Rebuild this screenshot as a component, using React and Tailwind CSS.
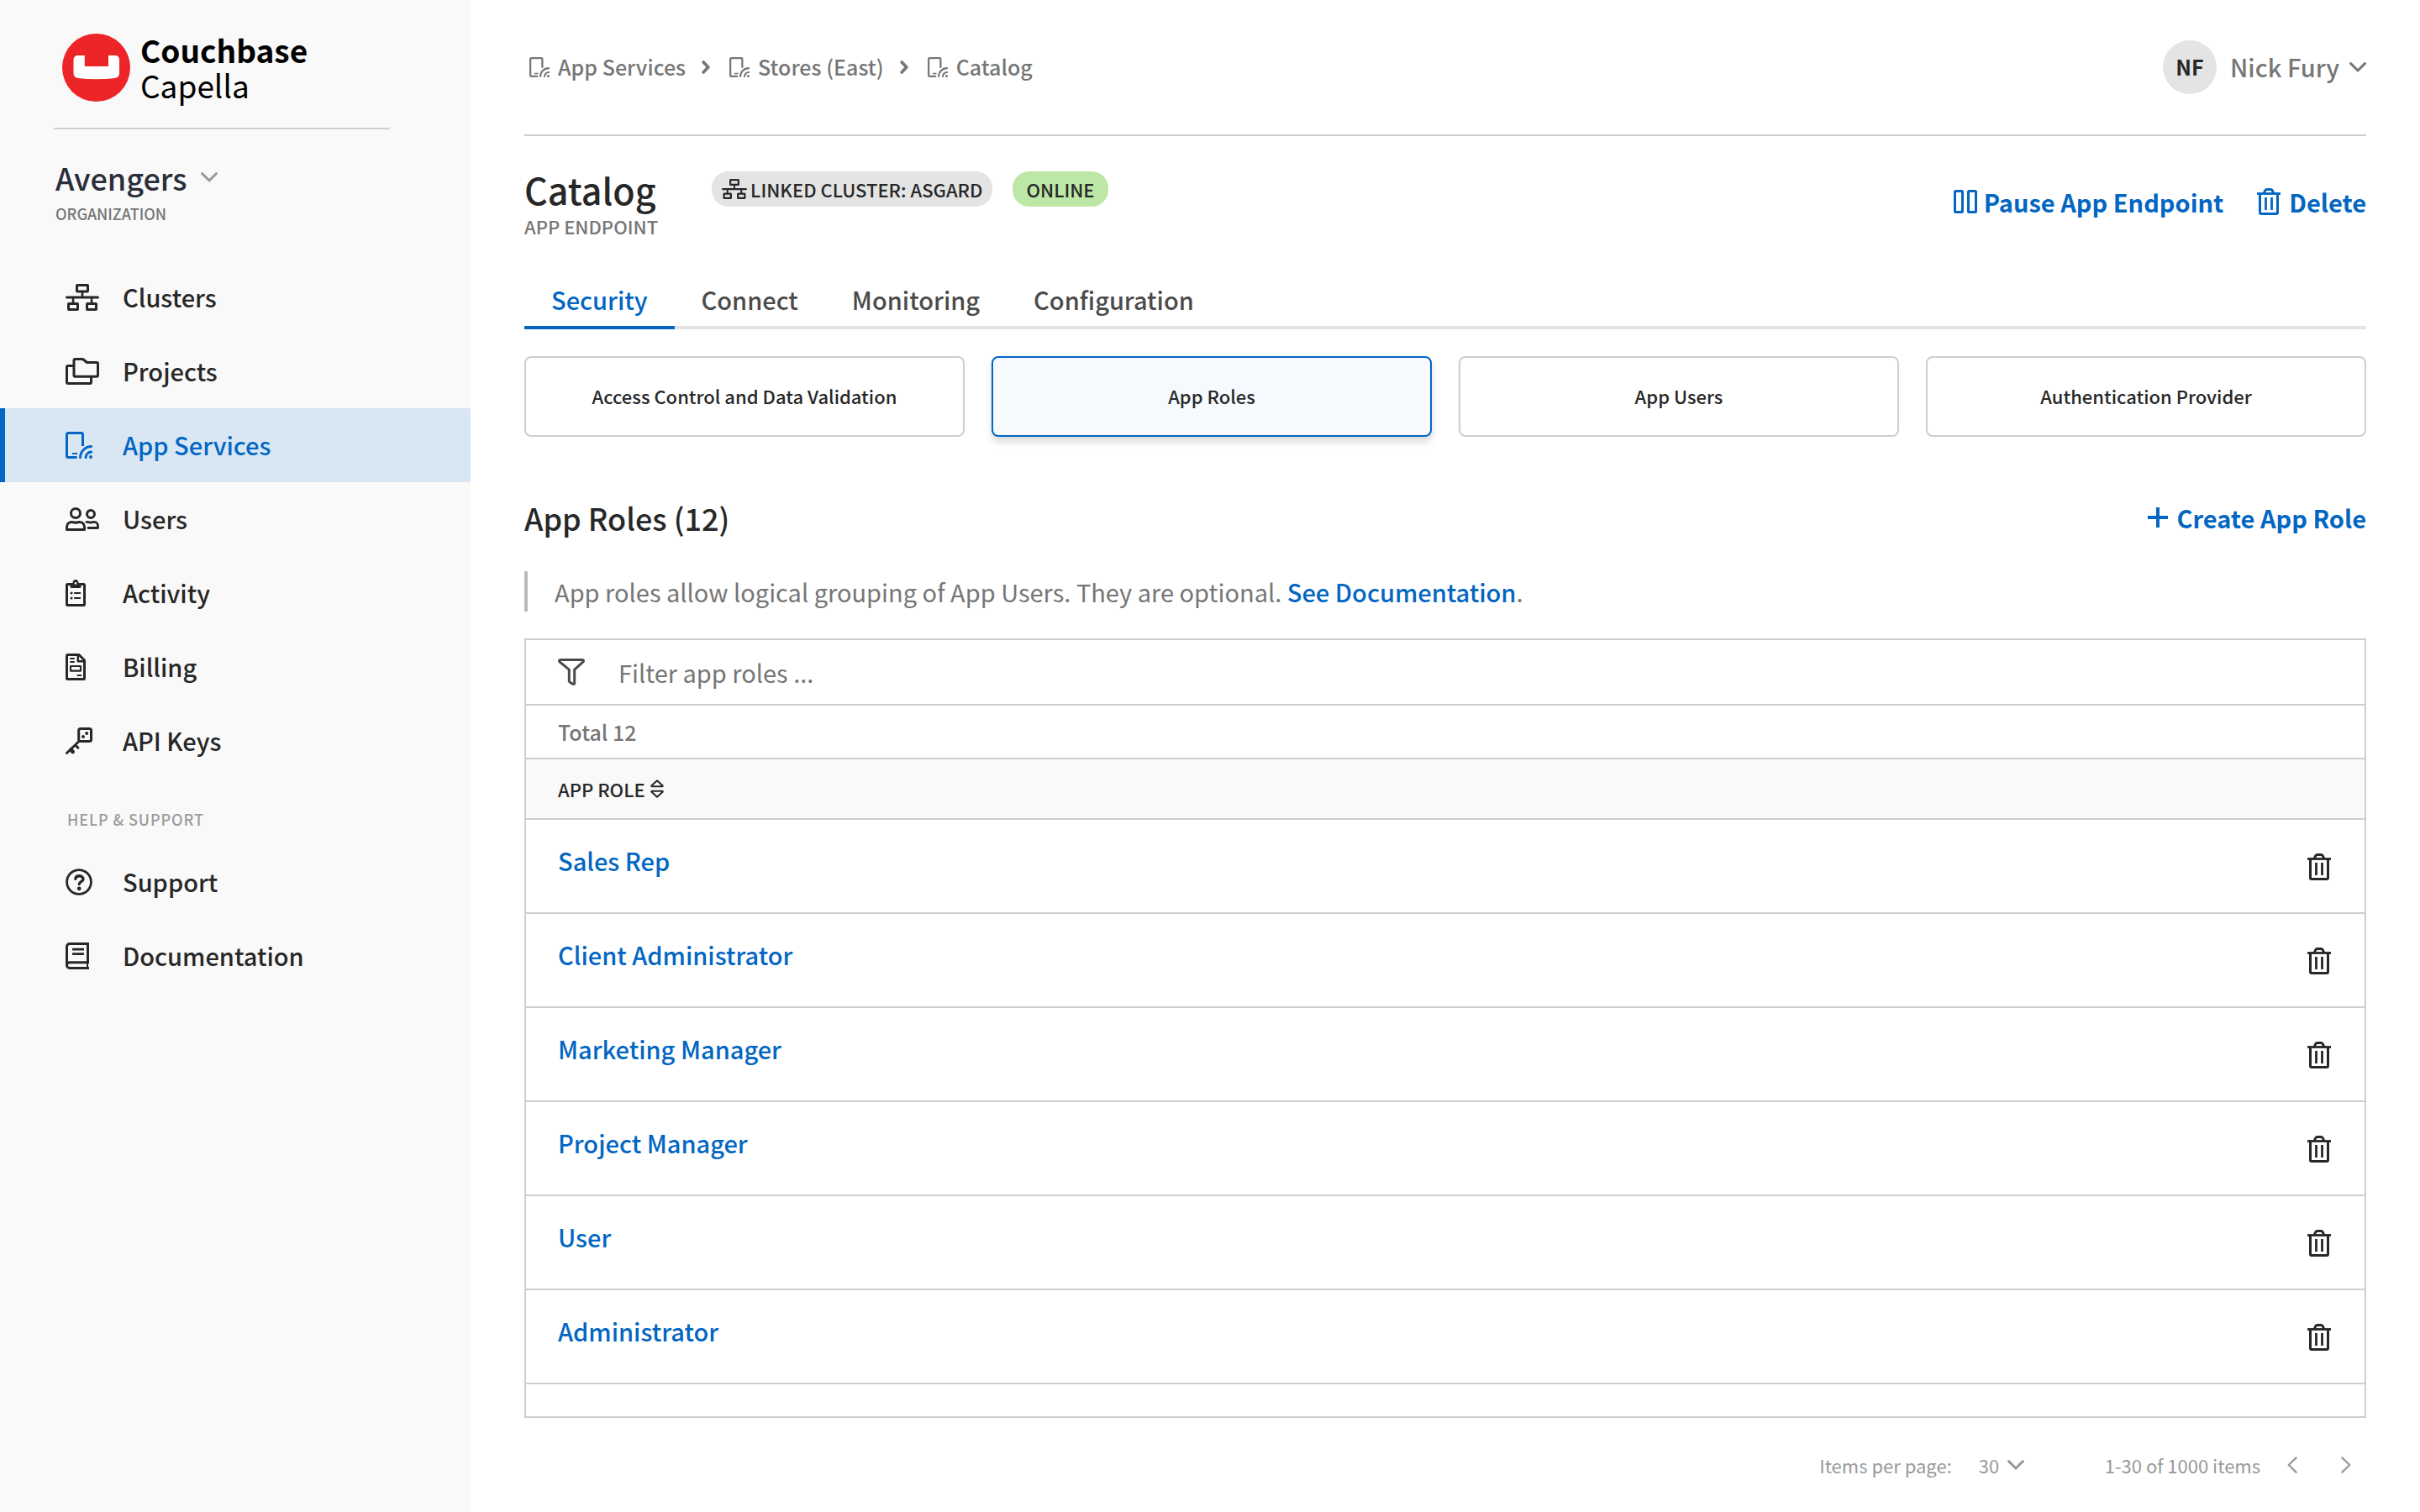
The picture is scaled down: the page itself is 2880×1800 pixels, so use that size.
const strokeProps = {
  fill: "none",
  stroke: "currentColor",
  strokeWidth: 3,
  strokeLinecap: "round",
  strokeLinejoin: "round",
  "aria-hidden": true,
};

function ClustersIcon({ className = "h-8 w-10" }) {
  return (
    <svg viewBox="0 0 40 32" className={className} {...strokeProps}>
      <rect x="13.5" y="1.5" width="13" height="7.5" rx="0.5" />
      <path d="M1.5 16H38.5" />
      <path d="M20 9V16M9 16V23M31 16V23" strokeWidth="2.6" />
      <rect x="3.5" y="23.5" width="11" height="7" rx="0.5" />
      <rect x="25.5" y="23.5" width="11" height="7" rx="0.5" />
    </svg>
  );
}

function ProjectsIcon() {
  return (
    <svg viewBox="0 0 40 32" className="h-8 w-10" {...strokeProps}>
      <path d="M11.5 1.5H20.5L25.5 5.5H37A1.5 1.5 0 0 1 38.5 7V20.7A1.5 1.5 0 0 1 37 22.2H11.5A1.5 1.5 0 0 1 10 20.7V3A1.5 1.5 0 0 1 11.5 1.5Z" />
      <path d="M9 9.5H3A1.5 1.5 0 0 0 1.5 11V29A1.5 1.5 0 0 0 3 30.5H29A1.5 1.5 0 0 0 30.5 29V23" />
    </svg>
  );
}

function AppServicesIcon({ className = "size-8" }) {
  return (
    <svg viewBox="0 0 32 32" className={className} {...strokeProps}>
      <path d="M20.5 17V3A1.5 1.5 0 0 0 19 1.5H3A1.5 1.5 0 0 0 1.5 3V29A1.5 1.5 0 0 0 3 30.5H13.5" strokeLinecap="butt" />
      <path d="M8 26H14" strokeWidth="2" strokeLinecap="butt" />
      <path d="M30.8 17.5A13.3 13.3 0 0 0 17.5 30.8" strokeWidth="2.8" />
      <path d="M30.8 24A6.8 6.8 0 0 0 24 30.8" strokeWidth="2.8" />
      <circle cx="30" cy="30" r="2" fill="currentColor" stroke="none" />
    </svg>
  );
}

function UsersIcon() {
  return (
    <svg viewBox="0 0 40 28" className="h-7 w-10" {...strokeProps}>
      <circle cx="12" cy="7" r="5.5" />
      <path d="M1.5 26.5V23.5C1.5 20 4 17.4 7.5 17.4C9 17.4 10 18.2 12 18.2S15 17.4 16.5 17.4C20 17.4 22.5 20 22.5 23.5V26.5Z" />
      <circle cx="30" cy="8" r="4.5" />
      <path d="M25 17.4C26.5 17.4 28 18 30 18S33 17.4 34.2 17.4C37 17.4 38.5 19.6 38.5 22.2V24.5H27" strokeWidth="2.8" />
    </svg>
  );
}

function ActivityIcon() {
  return (
    <svg viewBox="0 0 24 32" className="h-8 w-6" {...strokeProps}>
      <rect x="1.5" y="5.5" width="21" height="25" rx="1" />
      <path d="M5.5 5V8.5Q5.5 10 7 10H17Q18.5 10 18.5 8.5V5H15.6C15.6 1.8 14.2 0 12 0S8.4 1.8 8.4 5Z" fill="currentColor" stroke="none" />
      <circle cx="12" cy="4.4" r="1.3" fill="#f9f9f9" stroke="none" />
      <circle cx="7" cy="16" r="1.5" fill="currentColor" stroke="none" />
      <circle cx="7" cy="22" r="1.5" fill="currentColor" stroke="none" />
      <path d="M11 16H17.2M11 22H17.2" strokeWidth="2.2" />
    </svg>
  );
}

function BillingIcon() {
  return (
    <svg viewBox="0 0 24 32" className="h-8 w-6" {...strokeProps}>
      <path d="M2.5 1.5H16L22.5 8V29.5A1 1 0 0 1 21.5 30.5H2.5A1 1 0 0 1 1.5 29.5V2.5A1 1 0 0 1 2.5 1.5Z" />
      <path d="M14.8 2V9.2H22" strokeWidth="2.6" />
      <path d="M6 6H10M6 10H10M14.5 26H18.5" strokeWidth="2" />
      <rect x="6" y="15" width="12" height="5.6" strokeWidth="2.2" />
    </svg>
  );
}

function KeyIcon() {
  return (
    <svg viewBox="0 0 32 32" className="size-8" {...strokeProps}>
      <rect x="15.7" y="1.5" width="14.8" height="15" rx="2" />
      <circle cx="25.2" cy="7" r="2" fill="currentColor" stroke="none" />
      <circle cx="21" cy="11" r="2" fill="currentColor" stroke="none" />
      <path d="M16 16.5L1.5 30.5M11.5 21L14.8 24.2" />
      <path d="M6.5 26.5L8.6 29" strokeWidth="4.6" />
    </svg>
  );
}

function SupportIcon() {
  return (
    <svg viewBox="0 0 32 32" className="size-8" {...strokeProps}>
      <circle cx="16" cy="16" r="14.4" strokeWidth="2.8" />
      <path d="M11.8 12.2C12.2 9.8 14 8.8 16.2 8.8C18.8 8.8 21 10.2 21 12.6C21 15.6 16.2 15.6 16.2 18.6" strokeWidth="3.4" />
      <circle cx="16.2" cy="23.8" r="2.4" fill="currentColor" stroke="none" />
    </svg>
  );
}

function DocumentationIcon() {
  return (
    <svg viewBox="0 0 28 32" className="h-8 w-7" {...strokeProps} strokeLinecap="butt" strokeLinejoin="miter">
      <path d="M28 30.5H5A3.5 3.5 0 0 1 1.5 27V5A3.5 3.5 0 0 1 5 1.5H26.5V23.8H5A3.4 3.4 0 0 0 1.5 27.2" />
      <path d="M26 24V30" strokeWidth="2" />
      <path d="M8 8.2H22M8 13.6H22" strokeWidth="2.8" />
    </svg>
  );
}

function TrashIcon() {
  return (
    <svg viewBox="0 0 28 32" className="h-8 w-7" {...strokeProps} strokeLinecap="butt">
      <path d="M0 6.5H28" strokeWidth="2.8" />
      <path d="M8 6.5L9.6 3Q10.4 1.5 12 1.5H16Q17.6 1.5 18.4 3L20 6.5" />
      <path d="M3.5 6.5V29A1.5 1.5 0 0 0 5 30.5H23A1.5 1.5 0 0 0 24.5 29V6.5" />
      <path d="M10.5 11V26M17.5 11V26" strokeWidth="2.8" />
    </svg>
  );
}

function PauseIcon() {
  return (
    <svg viewBox="0 0 28 28" className="size-7" {...strokeProps}>
      <rect x="1.5" y="1.5" width="9" height="25" rx="1" />
      <rect x="17.5" y="1.5" width="9" height="25" rx="1" />
    </svg>
  );
}

function PlusIcon() {
  return (
    <svg viewBox="0 0 24 24" className="size-6" {...strokeProps} strokeWidth="4" strokeLinecap="butt">
      <path d="M12 0V24M0 12H24" />
    </svg>
  );
}

function FilterIcon() {
  return (
    <svg viewBox="0 0 32 32" className="size-8 text-[#4b4b4b]" {...strokeProps}>
      <path d="M2.8 1.6H29.2C30.6 1.6 30.9 3 30 3.8L19.7 13.2V29.2C19.7 30.5 18.4 30.8 17.4 30.2L14 27.9Q13.3 27.4 13.3 26.5V13.2L2 3.8C1.1 3 1.4 1.6 2.8 1.6Z" />
    </svg>
  );
}

function SortIcon() {
  return (
    <svg viewBox="0 0 16 22" className="h-[22px] w-4" {...strokeProps} strokeWidth="2">
      <path d="M8 1.2L14.8 7.6Q14.8 8.2 14.2 8.2H1.8Q1.2 8.2 1.2 7.6Z" />
      <path d="M8 20.8L14.8 14.4Q14.8 13.8 14.2 13.8H1.8Q1.2 13.8 1.2 14.4Z" />
    </svg>
  );
}

function ChevronDown({ className }) {
  return (
    <svg viewBox="0 0 20 12" className={className} {...strokeProps}>
      <path d="M1.6 1.6L10 10L18.4 1.6" />
    </svg>
  );
}

function ChevronSide({ className, d, width = 2.4 }) {
  return (
    <svg viewBox="0 0 12 20" className={className} {...strokeProps} strokeWidth={width}>
      <path d={d} />
    </svg>
  );
}

function Logo() {
  return (
    <a href="#home" className="flex items-center gap-3 pl-2.5 text-black">
      <svg viewBox="0 0 81 81" className="size-[81px]" aria-hidden="true">
        <circle cx="40.5" cy="40.5" r="40.5" fill="#ed2529" />
        <path d="M18 26H26.8V39H55V26H63.5Q68 26.5 68 31.5V47Q68 52 63 53Q52 54.2 40.5 54.2T18.5 53Q13.5 52 13.5 47V31.5Q13.5 26.5 18 26Z" fill="#fff" />
      </svg>
      <span className="flex flex-col text-[37px] leading-[42px]">
        <span className="font-bold">Couchbase</span>
        <span>Capella</span>
      </span>
    </a>
  );
}

const mainNav = [
  { label: "Clusters", icon: <ClustersIcon /> },
  { label: "Projects", icon: <ProjectsIcon /> },
  { label: "App Services", icon: <AppServicesIcon />, active: true },
  { label: "Users", icon: <UsersIcon /> },
  { label: "Activity", icon: <ActivityIcon /> },
  { label: "Billing", icon: <BillingIcon /> },
  { label: "API Keys", icon: <KeyIcon /> },
];

const helpNav = [
  { label: "Support", icon: <SupportIcon /> },
  { label: "Documentation", icon: <DocumentationIcon /> },
];

function NavList({ items }) {
  return (
    <ul>
      {items.map((item) => (
        <li key={item.label}>
          <a
            href="#nav"
            aria-current={item.active ? "page" : undefined}
            className={
              item.active
                ? "flex h-[88px] items-center border-l-6 border-[#0266c2] bg-[#d9e6f4] pl-18 text-[29px] font-medium text-[#0266c2]"
                : "flex h-[88px] items-center border-l-6 border-transparent pl-18 text-[29px] font-medium text-[#272727]"
            }
          >
            <span className="w-17">{item.icon}</span>
            {item.label}
          </a>
        </li>
      ))}
    </ul>
  );
}

function Sidebar() {
  return (
    <aside className="w-[560px] shrink-0 bg-[#f9f9f9]">
      <div className="ml-16 w-[400px] border-b-2 border-[#cecece] pt-[38px] pb-[30px]">
        <Logo />
      </div>
      <div className="pt-8 pl-[66px]">
        <button type="button" className="flex items-center gap-4 text-[36px] leading-[50px] font-medium text-[#2a2d3a]">
          Avengers
          <ChevronDown className="h-3 w-5 text-[#999]" />
        </button>
        <p className="pt-1 text-[18px] leading-7 font-medium text-[#767676]">ORGANIZATION</p>
      </div>
      <nav aria-label="Main" className="pt-[42px]">
        <NavList items={mainNav} />
        <h2 className="pt-9 pb-[18px] pl-20 text-[18px] leading-[26px] font-medium tracking-wider text-[#9b9b9b]">HELP &amp; SUPPORT</h2>
        <NavList items={helpNav} />
      </nav>
    </aside>
  );
}

const crumbs = ["App Services", "Stores (East)", "Catalog"];

function TopBar() {
  return (
    <header className="flex h-[162px] items-start justify-between border-b-2 border-[#cecece] pt-12 text-[#767676]">
      <nav aria-label="Breadcrumb" className="flex h-16 items-center pl-1.5">
        <ol className="flex items-center gap-[18px]">
          {crumbs.map((crumb, i) => (
            <li key={crumb} className="flex items-center gap-[22px]">
              {i > 0 && <ChevronSide className="h-4 w-3" d="M2.5 2.5L9.5 10L2.5 17.5" width={4.6} />}
              <a href="#crumb" className="flex items-center gap-2.5 text-[25px] font-medium">
                <AppServicesIcon className="size-6" />
                {crumb}
              </a>
            </li>
          ))}
        </ol>
      </nav>
      <button type="button" className="flex items-center text-[29px] font-medium">
        <span className="flex size-16 items-center justify-center rounded-full bg-[#e4e4e4] text-[25px] font-bold text-[#272727]">NF</span>
        <span className="pr-3 pl-4">Nick Fury</span>
        <ChevronDown className="h-3 w-5" />
      </button>
    </header>
  );
}

function TitleRow() {
  return (
    <div className="flex items-start justify-between pt-9">
      <div className="flex items-start gap-16">
        <div>
          <h1 className="text-[43px] leading-[54px] font-medium text-[#272727]">Catalog</h1>
          <p className="text-[22px] leading-[34px] font-medium text-[#767676]">APP ENDPOINT</p>
        </div>
        <div className="flex gap-6 pt-1.5 text-[22px] leading-[42px] font-medium text-[#272727]">
          <span className="flex items-center gap-1 rounded-[20px] bg-[#e4e4e4] px-3">
            <ClustersIcon className="h-6 w-[30px]" />
            LINKED CLUSTER: ASGARD
          </span>
          <span className="rounded-[20px] bg-[#bde7a6] px-4">ONLINE</span>
        </div>
      </div>
      <div className="flex gap-10 pt-5 text-[29px] leading-[44px] font-bold text-[#0266c2]">
        <button type="button" className="flex items-center gap-2">
          <PauseIcon />
          Pause App Endpoint
        </button>
        <button type="button" className="flex items-center gap-2.5">
          <TrashIcon />
          Delete
        </button>
      </div>
    </div>
  );
}

const tabs = ["Security", "Connect", "Monitoring", "Configuration"];
const cards = ["Access Control and Data Validation", "App Roles", "App Users", "Authentication Provider"];

function Tabs() {
  return (
    <>
      <div role="tablist" className="mt-11 flex border-b-4 border-[#e4e4e4] text-[29px] leading-[44px] font-medium text-[#4b4b4b]">
        {tabs.map((tab, i) => (
          <button
            key={tab}
            type="button"
            role="tab"
            aria-selected={i === 0}
            className={i === 0 ? "-mb-1 border-b-4 border-[#0266c2] px-8 pt-1 pb-2.5 text-[#0266c2]" : "px-8 pt-1 pb-2.5"}
          >
            {tab}
          </button>
        ))}
      </div>
      <div className="mt-8 grid grid-cols-4 gap-8 text-[22px] font-medium text-[#272727]">
        {cards.map((card) => (
          <button
            key={card}
            type="button"
            className={
              card === "App Roles"
                ? "h-24 rounded-lg border-2 border-[#0266c2] bg-[#f6f9fe] pb-0.5 shadow-[0_6px_8px_rgba(0,0,0,0.14)]"
                : "h-24 rounded-lg border-2 border-[#cecece] bg-white pb-0.5"
            }
          >
            {card}
          </button>
        ))}
      </div>
    </>
  );
}

const roles = ["Sales Rep", "Client Administrator", "Marketing Manager", "Project Manager", "User", "Administrator"];

function RolesPanel() {
  return (
    <section className="mt-8 border-2 border-[#cecece]">
      <label className="flex h-19 items-center gap-10 px-[38px]">
        <FilterIcon />
        <input
          type="text"
          aria-label="Filter app roles"
          placeholder="Filter app roles ..."
          className="flex-1 text-[29px] leading-[44px] outline-none placeholder:text-[#767676]"
        />
      </label>
      <p className="h-16 border-t-2 border-[#cecece] px-[38px] text-[25px] leading-[62px] font-medium text-[#767676]">Total 12</p>
      <table className="w-full">
        <thead>
          <tr className="h-[72px] border-t-2 border-[#cecece] bg-[#f9f9f9]">
            <th scope="col" className="px-[38px] text-left">
              <button type="button" className="flex items-center gap-1.5 text-[22px] font-medium text-[#272727]">
                APP ROLE
                <SortIcon />
              </button>
            </th>
            <td />
          </tr>
        </thead>
        <tbody>
          {roles.map((role) => (
            <tr key={role} className="h-[112px] border-y-2 border-[#cecece]">
              <td className="px-[38px] pt-6 align-top">
                <a href="#role" className="block text-[29px] leading-[48px] font-medium text-[#0266c2]">
                  {role}
                </a>
              </td>
              <td className="w-[108px] pt-10 pr-10 align-top">
                <button type="button" aria-label={`Delete ${role}`} className="ml-auto block text-[#272727]">
                  <TrashIcon />
                </button>
              </td>
            </tr>
          ))}
        </tbody>
      </table>
      <div className="h-[38px]" />
    </section>
  );
}

function Pagination() {
  return (
    <footer className="flex items-center justify-end pt-9 pr-[18px] text-[22px] leading-10 text-[#999]">
      <label htmlFor="page-size" className="pr-8">
        Items per page:
      </label>
      <span className="relative flex items-center">
        <select id="page-size" defaultValue="30" className="w-[54px] appearance-none outline-none">
          <option>30</option>
          <option>60</option>
        </select>
        <ChevronDown className="pointer-events-none absolute right-0 h-3 w-5" />
      </span>
      <span className="pr-8 pl-24">1-30 of 1000 items</span>
      <button type="button" aria-label="Previous page" className="mr-[52px]">
        <ChevronSide className="h-5 w-3" d="M10.6 1.4L1.8 10L10.6 18.6" />
      </button>
      <button type="button" aria-label="Next page">
        <ChevronSide className="h-5 w-3" d="M1.4 1.4L10.2 10L1.4 18.6" />
      </button>
    </footer>
  );
}

export default function App() {
  return (
    <div className="flex min-h-screen bg-white font-['Noto_Sans_CJK_SC',sans-serif]">
      <Sidebar />
      <main className="min-w-0 flex-1 px-16">
        <TopBar />
        <TitleRow />
        <Tabs />
        <div className="mt-17 flex items-center justify-between">
          <h2 className="text-[36px] leading-14 font-medium text-[#272727]">App Roles (12)</h2>
          <button type="button" className="flex items-center gap-2.5 text-[29px] leading-[44px] font-bold text-[#0266c2]">
            <PlusIcon />
            Create App Role
          </button>
        </div>
        <p className="mt-9 border-l-4 border-[#bababa] pl-8 text-[29px] leading-[48px] text-[#767676]">
          App roles allow logical grouping of App Users. They are optional.{" "}
          <a href="#docs" className="font-medium text-[#0266c2]">
            See Documentation
          </a>
          .
        </p>
        <RolesPanel />
        <Pagination />
      </main>
    </div>
  );
}
